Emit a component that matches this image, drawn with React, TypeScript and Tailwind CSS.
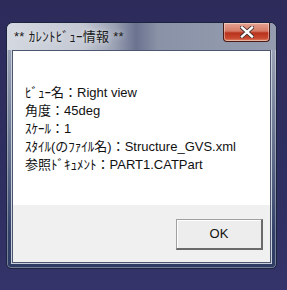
export default function App() {
  const rows = [
    'ﾋﾞｭｰ名：Right view',
    '角度：45deg',
    'ｽｹｰﾙ：1',
    'ｽﾀｲﾙ(のﾌｧｲﾙ名)：Structure_GVS.xml',
    '参照ﾄﾞｷｭﾒﾝﾄ：PART1.CATPart',
  ];

  return (
    <div className="w-[287px] h-[290px] bg-[linear-gradient(180deg,#2c2b5a_0%,#302f62_70%,#35346a_100%)] pt-[22px] pl-[6px] overflow-hidden">
      <div className="w-[271px] h-[247px] rounded-t-[7px] rounded-b-[5px] border border-[#1d2440] bg-[linear-gradient(180deg,#a9b0c0_0%,#8e97ab_20%,#5f6b89_55%,#34426a_85%,#2e3b62_100%)] shadow-[inset_0_0_0_1px_rgba(255,255,255,0.35)] flex flex-col px-[5px] pb-[5px]">
        {/* title bar */}
        <div className="relative h-[27px] -mx-[5px] px-[7px] rounded-t-[6px] bg-[linear-gradient(90deg,#d4d8e0_0%,#c3c8d3_28%,#9aa1b3_40%,#6a7290_48%,#8a92a7_56%,#8f97ab_75%,#959cb0_100%)] flex items-center">
          <span className="text-[13px] tracking-[0.3px] text-[#1a1a1a] leading-none -mt-[1px] [font-family:'Liberation_Sans','Noto_Sans_CJK_JP',sans-serif] [text-shadow:0_0_6px_rgba(255,255,255,0.9)]">
            ** ｶﾚﾝﾄﾋﾞｭｰ情報 **
          </span>
          <div className="absolute right-[6px] top-0 w-[47px] h-[19px] rounded-b-[4px] border border-[#4a1a14] border-t-0 bg-[linear-gradient(180deg,#e7a493_0%,#d47a66_45%,#b8321c_55%,#c94a30_85%,#e08a6a_100%)] flex items-center justify-center shadow-[inset_0_0_0_1px_rgba(255,255,255,0.4)]">
            <svg width="14" height="12" viewBox="0 0 14 12">
              <path d="M2 1.5 L12 10.5 M12 1.5 L2 10.5" stroke="#3a2a28" strokeWidth="4" strokeLinecap="square" />
              <path d="M2 1.5 L12 10.5 M12 1.5 L2 10.5" stroke="#ffffff" strokeWidth="2.4" strokeLinecap="square" />
            </svg>
          </div>
        </div>
        {/* client area */}
        <div className="flex-1 border border-[#4c566e] outline outline-1 outline-[#c8cedb] flex flex-col [font-family:'Liberation_Sans','Noto_Sans_CJK_JP',sans-serif]">
          <div className="h-[154px] bg-white pl-[12px] pt-[33px] flex flex-col">
            {rows.map((r) => (
              <div key={r} className="text-[13px] leading-[18px] text-[#111]">
                {r}
              </div>
            ))}
          </div>
          <div className="flex-1 bg-[#f0f0f0] flex justify-end items-start pt-[14px] pr-[7px]">
            <button className="w-[87px] h-[31px] bg-[#ededed] border-t border-l border-[#a0a0a0] border-r-2 border-b-2 border-r-[#6a6a6a] border-b-[#6a6a6a] shadow-[inset_1px_1px_0_#ffffff] text-[13px] text-[#111] flex items-center justify-center">
              OK
            </button>
          </div>
        </div>
      </div>
    </div>
  );
}
